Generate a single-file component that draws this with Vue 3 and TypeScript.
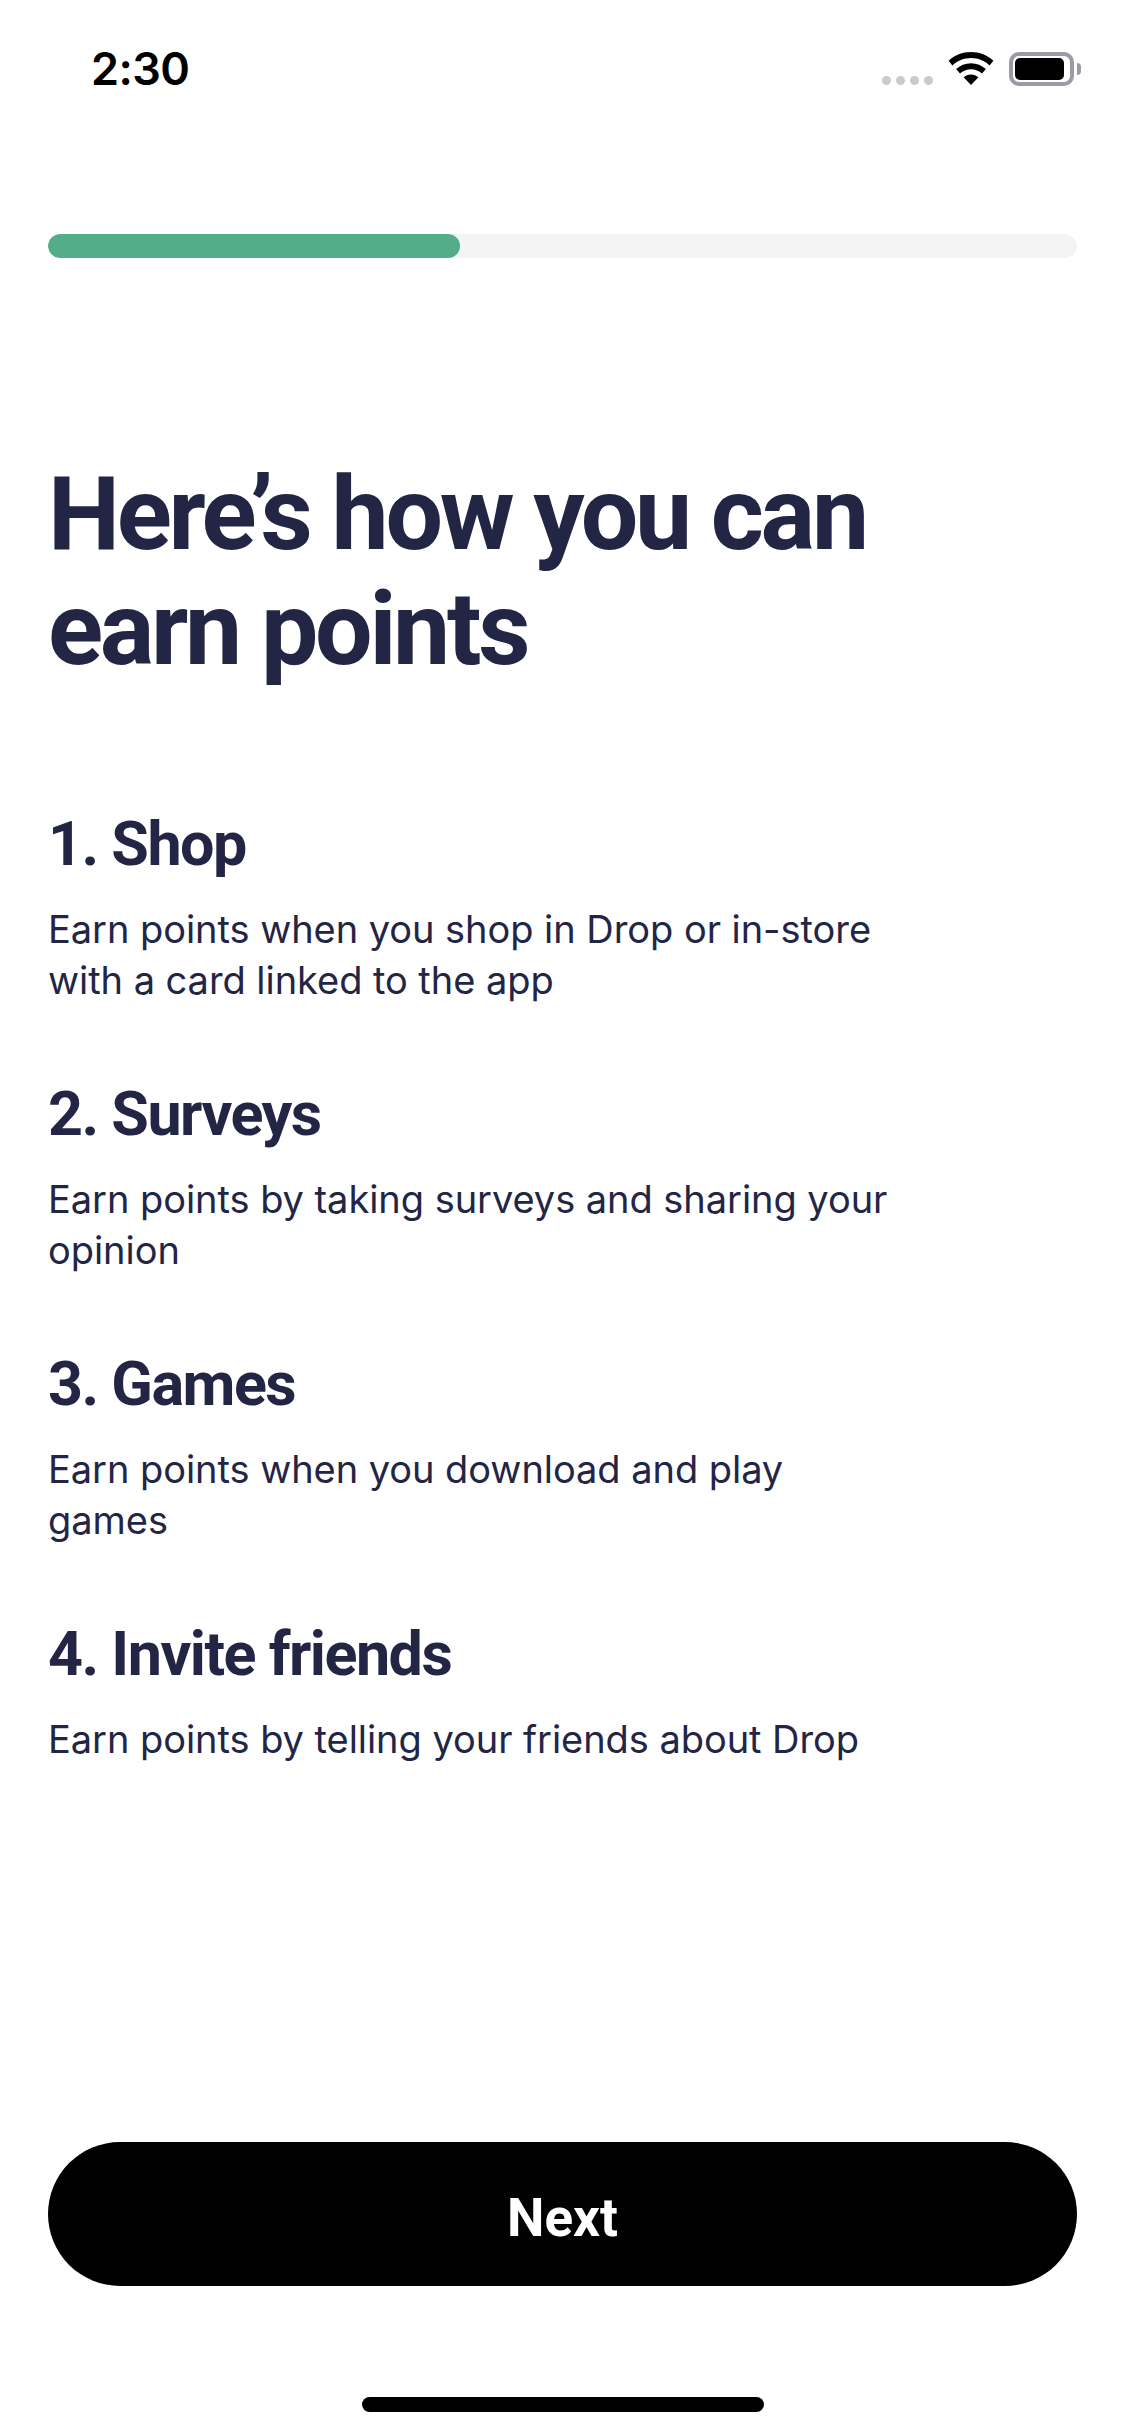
<script setup lang="ts">
interface Step {
  title: string
  text: string
}

const steps: Step[] = [
  { title: '1. Shop', text: 'Earn points when you shop in Drop or in-store with a card linked to the app' },
  { title: '2. Surveys', text: 'Earn points by taking surveys and sharing your opinion' },
  { title: '3. Games', text: 'Earn points when you download and play games' },
  { title: '4. Invite friends', text: 'Earn points by telling your friends about Drop' },
]
const progress = 40
</script>

<template>
  <div class="screen">
    <header class="status">
      <span class="time">2:30</span>
      <div class="status-icons">
        <div class="dots"><i></i><i></i><i></i><i></i></div>
        <svg class="wifi" width="46" height="33" viewBox="0 0 46 33">
          <path d="M23 0C14.4 0 6.6 3.3 0.6 8.8L4.4 13.4C9.4 8.9 15.9 6.1 23 6.1S36.6 8.9 41.6 13.4L45.4 8.8C39.4 3.3 31.6 0 23 0Z" fill="#000"/>
          <path d="M23 11.2C17.3 11.2 12.1 13.4 8.1 17L12 21.6C14.9 19 18.8 17.3 23 17.3S31.1 19 34 21.6L37.9 17C33.9 13.4 28.7 11.2 23 11.2Z" fill="#000"/>
          <path d="M23 22.4C20.1 22.4 17.6 23.5 15.6 25.2L23 33L30.4 25.2C28.4 23.5 25.9 22.4 23 22.4Z" fill="#000"/>
        </svg>
        <div class="battery"><div class="cell"></div></div>
        <div class="nub"></div>
      </div>
    </header>

    <div class="track">
      <div class="fill" :style="{ width: progress + '%' }"></div>
    </div>

    <h1 class="title">Here’s how you can<br />earn points</h1>

    <section class="steps">
      <article v-for="step in steps" :key="step.title" class="step">
        <h2 class="step-title">{{ step.title }}</h2>
        <p class="step-text">{{ step.text }}</p>
      </article>
    </section>

    <div class="footer">
      <button class="next" type="button">Next</button>
      <div class="home"></div>
    </div>
  </div>
</template>

<style>
html, body { margin: 0; background: #fff; }
</style>

<style scoped>
.screen {
  width: 1125px;
  height: 2436px;
  box-sizing: border-box;
  display: flex;
  flex-direction: column;
  background: #fff;
  padding: 0 48px;
  font-family: Inter, "Liberation Sans", sans-serif;
  color: #232545;
  overflow: hidden;
}
.status {
  padding-top: 52px;
  display: flex;
  justify-content: space-between;
  align-items: flex-start;
  height: 34px;
}
.time {
  margin-left: 43px;
  font-size: 45px;
  line-height: 34px;
  font-weight: 600;
  letter-spacing: -0.6px;
  color: #000;
}
.status-icons {
  display: flex;
  align-items: flex-start;
  margin-right: -4px;
}
.dots {
  display: flex;
  gap: 5px;
  margin-top: 24px;
  margin-right: 15px;
}
.dots i {
  width: 9px;
  height: 9px;
  border-radius: 50%;
  background: #c9c9d0;
}
.wifi { margin-right: 15px; }
.battery {
  width: 65px;
  height: 34px;
  box-sizing: border-box;
  border: 4px solid #9b9aa5;
  border-radius: 10px;
  padding: 2px 6px 2px 2px;
}
.cell {
  height: 100%;
  background: #000;
  border-radius: 5px;
}
.nub {
  width: 4px;
  height: 12px;
  margin: 11px 0 0 3px;
  background: #9b9aa5;
  border-radius: 0 4px 4px 0;
}
.track {
  margin-top: 148px;
  height: 24px;
  flex: none;
  background: #f4f4f4;
  border-radius: 12px;
  overflow: hidden;
}
.fill {
  height: 100%;
  background: #52ad88;
  border-radius: 12px;
}
.title {
  margin: 199px 0 0;
  font-family: Roboto, Inter, sans-serif;
  font-size: 102px;
  line-height: 115px;
  font-weight: 700;
  letter-spacing: -3.3px;
}
.steps {
  margin-top: 122px;
  display: flex;
  flex-direction: column;
  gap: 73px;
}
.step-title {
  margin: 0;
  font-family: Roboto, Inter, sans-serif;
  font-size: 61px;
  line-height: 70px;
  font-weight: 700;
  letter-spacing: -1.5px;
}
.step-text {
  margin: 25px 0 0;
  max-width: 860px;
  font-size: 38px;
  line-height: 51px;
  font-weight: 400;
  letter-spacing: -0.05px;
}
.footer {
  margin-top: auto;
  display: flex;
  flex-direction: column;
  align-items: center;
}
.next {
  width: 100%;
  height: 144px;
  border: none;
  border-radius: 72px;
  background: #000;
  color: #fff;
  padding-top: 8px;
  font-family: Roboto, Inter, sans-serif;
  font-size: 53px;
  font-weight: 700;
}
.home {
  width: 402px;
  height: 15px;
  margin: 111px 0 24px;
  border-radius: 8px;
  background: #000;
}
</style>
